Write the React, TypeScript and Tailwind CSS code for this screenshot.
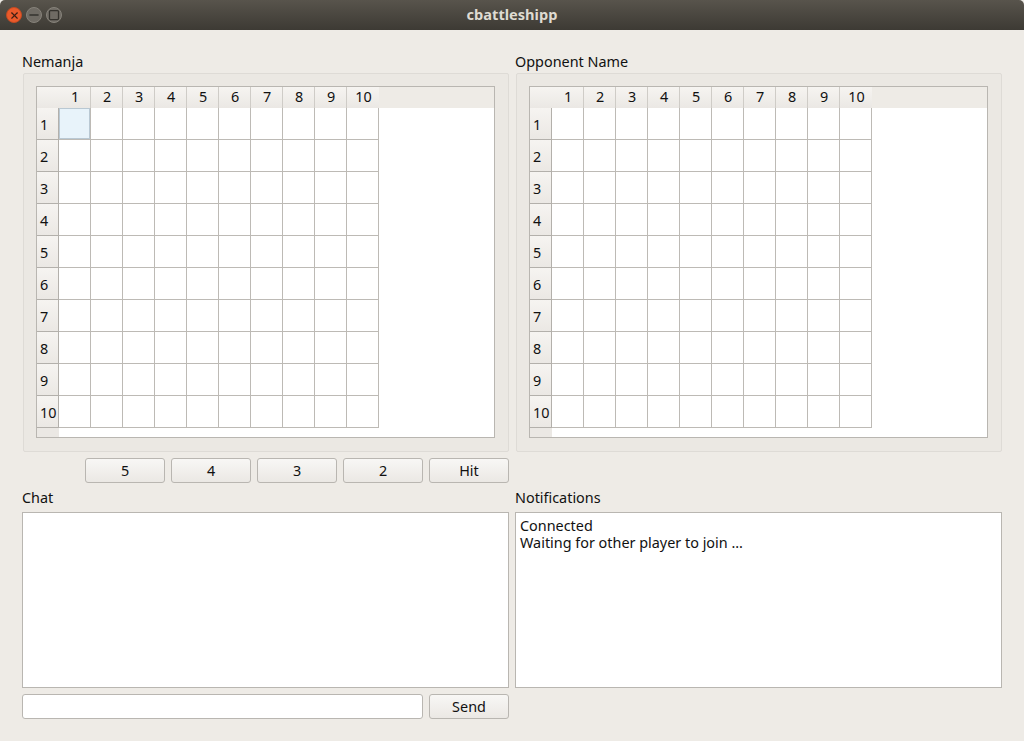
import { Minus, Square, X } from "lucide-react"

const nums = [1, 2, 3, 4, 5, 6, 7, 8, 9, 10]

const Board = ({ name, selected }: { name: string; selected?: boolean }) => {
  return (
    <div>
      <div className="h-[21px] text-[14.4px] leading-[20px]">{name}</div>
      <div className="ml-px h-[379px] border border-[#dedbd6] rounded-[2px] bg-[#ebe8e3] pt-3 pl-3 pr-[13px]">
        <div className="h-[352px] border border-[#b9b6b1] bg-white overflow-hidden">
          <div className="flex h-[21px] bg-[#eeebe6]">
            <div className="w-[22px] bg-gradient-to-b from-[#f6f4f1] to-[#ebe8e4]" />
            {nums.map((n) => (
              <div
                key={n}
                className="w-[32px] flex items-center justify-center pl-px border-r border-[#cfccc7] last:border-r-0 bg-gradient-to-b from-[#f6f4f1] to-[#ebe8e4] leading-none"
              >
                {n}
              </div>
            ))}
          </div>
          {nums.map((r) => (
            <div key={r} className="flex h-[32px]">
              <div className="w-[22px] flex items-center pl-[3px] pt-[3px] border-r border-b border-[#b3b0ab] bg-gradient-to-b from-[#f6f4f1] to-[#ebe8e4] leading-none">
                {r}
              </div>
              {nums.map((c) =>
                selected && r === 1 && c === 1 ? (
                  <div key={c} className="w-[32px] border-r border-b border-[#bdbab5] bg-white">
                    <div className="h-full w-full border border-[#b9c8d3] bg-[#e8f3fa]" />
                  </div>
                ) : (
                  <div key={c} className="w-[32px] border-r border-b border-[#bdbab5] bg-white" />
                )
              )}
            </div>
          ))}
          <div className="h-[9px] w-[22px] bg-[#ebe8e4]" />
        </div>
      </div>
    </div>
  )
}

const Button = ({ label, width }: { label: string; width: string }) => {
  return (
    <button
      className={`${width} h-[25px] pt-[2px] border border-[#b9b6b1] rounded-[3px] bg-gradient-to-b from-[#f8f7f5] to-[#ebe8e4] text-[14.4px] leading-none text-[#111111]`}
    >
      {label}
    </button>
  )
}

export default function App() {
  return (
    <div
      className="h-[741px] w-[1024px] overflow-hidden bg-[#eeebe6] text-[14.4px] text-[#111111]"
      style={{ fontFamily: '"Noto Sans", "Open Sans", sans-serif' }}
    >
      <div className="relative flex h-[30px] items-center rounded-t-[5px] bg-gradient-to-b from-[#58544c] to-[#3d3a34] pl-[6px]">
        <div className="flex gap-[4px]">
          <div className="flex h-4 w-4 items-center justify-center rounded-full bg-[#ea5a2b] border border-[#c24a22]">
            <X className="h-[11px] w-[11px] text-[#3f2014]" strokeWidth={2.5} />
          </div>
          <div className="flex h-4 w-4 items-center justify-center rounded-full bg-[#6f6b64] border border-[#86827a]">
            <Minus className="h-[14px] w-[14px] text-[#35332e]" strokeWidth={2.5} />
          </div>
          <div className="flex h-4 w-4 items-center justify-center rounded-full bg-[#6f6b64] border border-[#86827a]">
            <Square className="h-[12px] w-[12px] text-[#35332e]" strokeWidth={2.5} />
          </div>
        </div>
        <div className="absolute inset-x-0 text-center text-[14.6px] font-bold text-[#dfdbd2]">cbattleshipp</div>
      </div>

      <div className="grid grid-cols-[487px_487px] gap-x-[6px] pl-[22px] pt-[22px]">
        <Board name="Nemanja" selected />
        <Board name="Opponent Name" />

        <div className="col-span-2 mt-[6px] flex gap-[6px] pl-[63px]">
          <Button label="5" width="w-[80px]" />
          <Button label="4" width="w-[80px]" />
          <Button label="3" width="w-[80px]" />
          <Button label="2" width="w-[80px]" />
          <Button label="Hit" width="w-[80px]" />
        </div>

        <div className="mt-[4px]">
          <div className="h-[25px] leading-[20px] pt-px">Chat</div>
          <div className="h-[176px] border border-[#b9b6b1] bg-white" />
        </div>
        <div className="mt-[4px]">
          <div className="h-[25px] leading-[20px] pt-px">Notifications</div>
          <div className="h-[176px] border border-[#b9b6b1] bg-white pl-[4px] pt-[4px] leading-[17px]">
            <div>Connected</div>
            <div>Waiting for other player to join ...</div>
          </div>
        </div>

        <div className="col-span-2 mt-[6px] flex gap-[6px]">
          <div className="h-[25px] w-[401px] rounded-[3px] border border-[#b9b6b1] bg-white" />
          <Button label="Send" width="w-[80px]" />
        </div>
      </div>
    </div>
  )
}
